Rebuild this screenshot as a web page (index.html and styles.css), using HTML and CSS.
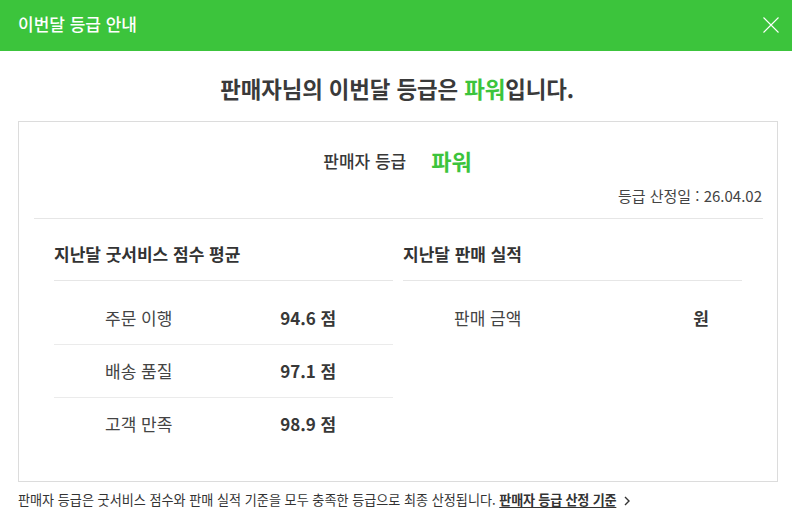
FILE: index.html
```html
<!DOCTYPE html>
<html lang="ko">
<head>
<meta charset="utf-8">
<title>이번달 등급 안내</title>
<link rel="stylesheet" href="styles.css">
</head>
<body>
<header class="modal-header">
  <span class="modal-title">이번달 등급 안내</span>
  <svg class="close-icon" width="16" height="16" viewBox="0 0 16 16" aria-hidden="true">
    <path d="M0.5 0.5 L15.5 15.5 M15.5 0.5 L0.5 15.5" stroke="#fff" stroke-width="1.1" fill="none"/>
  </svg>
</header>
<main class="modal-body">
  <h1 class="headline">판매자님의 이번달 등급은 <span class="accent">파워</span>입니다.</h1>
  <section class="grade-box">
    <div class="grade-top">
      <div class="grade-line">
        <span class="grade-label">판매자 등급</span>
        <span class="grade-value">파워</span>
      </div>
      <div class="grade-date">등급 산정일 : 26.04.02</div>
    </div>
    <div class="grade-cols">
      <div class="col">
        <h2 class="col-title">지난달 굿서비스 점수 평균</h2>
        <div class="rows">
          <div class="row"><span class="cell label">주문 이행</span><span class="cell value">94.6 점</span></div>
          <div class="row"><span class="cell label">배송 품질</span><span class="cell value">97.1 점</span></div>
          <div class="row"><span class="cell label">고객 만족</span><span class="cell value">98.9 점</span></div>
        </div>
      </div>
      <div class="col">
        <h2 class="col-title">지난달 판매 실적</h2>
        <div class="rows">
          <div class="row"><span class="cell label">판매 금액</span><span class="cell value value-right">원</span></div>
        </div>
      </div>
    </div>
  </section>
  <p class="footnote">판매자 등급은 굿서비스 점수와 판매 실적 기준을 모두 충족한 등급으로 최종 산정됩니다. <a class="footnote-link" href="#">판매자 등급 산정 기준</a><svg class="chevron" width="8" height="10" viewBox="0 0 8 10" aria-hidden="true"><path d="M2 1 L6 5 L2 9" stroke="#333" stroke-width="1.4" fill="none"/></svg></p>
</main>
</body>
</html>
```
FILE: styles.css
```css
* { box-sizing: border-box; }
html, body { margin: 0; padding: 0; background: #fff; }
body {
  font-family: "Noto Sans CJK KR", "Noto Sans", sans-serif;
  color: #333;
  width: 792px;
  height: 527px;
  overflow: hidden;
}
.modal-header {
  height: 51px;
  background: #3cc43c;
  display: flex;
  align-items: center;
  justify-content: space-between;
  padding: 0 13px 0 18px;
}
.modal-title {
  color: #fff;
  font-size: 17px;
  font-weight: 500;
  line-height: 24px;
  margin-top: -4px;
}
.close-icon { display: block; margin-top: -2px; }
.modal-body { padding: 0 14px 0 18px; }
.headline {
  margin: 22px 0 18px;
  text-align: center;
  font-size: 22.4px;
  line-height: 30px;
  font-weight: 700;
  color: #3a3a3a;
  padding-right: 2px;
  letter-spacing: -0.1px;
}
.accent { color: #3cc43c; }
.grade-box {
  width: 760px;
  border: 1px solid #dcdcdc;
  padding-bottom: 31px;
}
.grade-top {
  margin: 0 14px 0 15px;
  border-bottom: 1px solid #e6e6e6;
  padding: 23px 0 12px;
}
.grade-line {
  display: flex;
  justify-content: center;
  align-items: center;
  gap: 25px;
  height: 30px;
  padding-right: 2px;
}
.grade-label { font-size: 17px; color: #383838; font-weight: 500; }
.grade-value { font-size: 22px; font-weight: 700; color: #3cc43c; }
.grade-date {
  margin-top: 11px;
  padding-right: 1px;
  text-align: right;
  font-size: 15px;
  line-height: 20px;
  color: #444;
}
.grade-cols {
  display: grid;
  grid-template-columns: 1fr 1fr;
  gap: 10px;
  padding: 0 35px 0 35px;
}
.col-title {
  margin: 0;
  padding: 23px 0 14px;
  font-size: 17px;
  line-height: 24px;
  font-weight: 700;
  color: #333;
  border-bottom: 1px solid #e6e6e6;
}
.rows { margin-top: 11px; }
.row {
  display: grid;
  grid-template-columns: 1fr 1fr;
  height: 53px;
  align-items: center;
  border-bottom: 1px solid #ebebeb;
}
.row:last-child { border-bottom: none; height: 52px; }
.cell { text-align: center; font-size: 17px; line-height: 22px; }
.label { color: #444; }
.value { font-weight: 700; color: #383838; }
.value-right { text-align: right; padding-right: 33px; }
.footnote {
  margin: 9px 0 0;
  font-size: 13.1px;
  line-height: 18px;
  color: #333;
  white-space: nowrap;
}
.footnote-link {
  color: #333;
  font-weight: 700;
  text-decoration: underline;
  text-underline-offset: 2px;
  letter-spacing: -0.2px;
}
.chevron { margin-left: 7px; vertical-align: -1px; }
```
